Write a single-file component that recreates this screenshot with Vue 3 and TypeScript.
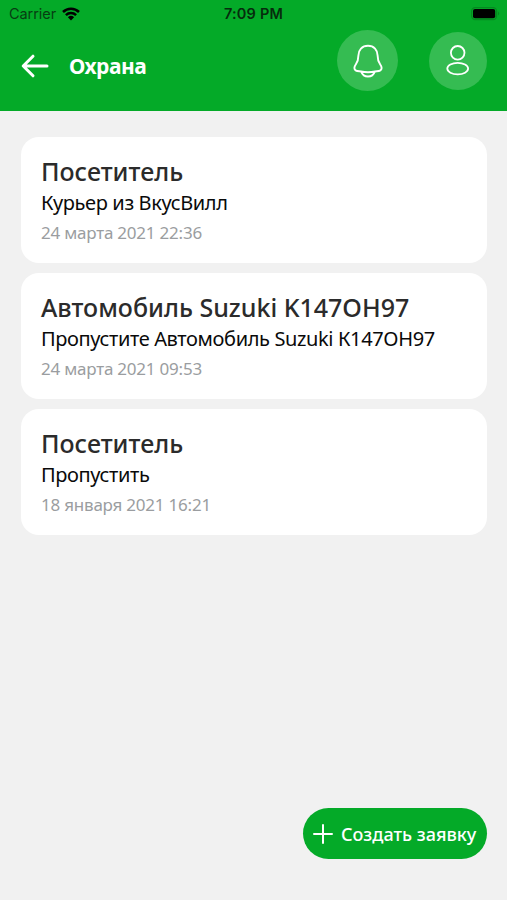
<script setup lang="ts">
interface Request {
  id: number
  title: string
  text: string
  date: string
}

const requests: Request[] = [
  { id: 1, title: 'Посетитель', text: 'Курьер из ВкусВилл', date: '24 марта 2021 22:36' },
  { id: 2, title: 'Автомобиль Suzuki K147OH97', text: 'Пропустите Автомобиль Suzuki К147ОН97', date: '24 марта 2021 09:53' },
  { id: 3, title: 'Посетитель', text: 'Пропустить', date: '18 января 2021 16:21' },
]
</script>

<template>
  <div class="screen">
    <header class="header">
      <div class="status">
        <div class="carrier">
          <span>Carrier</span>
          <svg class="wifi" viewBox="0 0 18 14" width="18" height="14">
            <path d="M1 5a11.400 11.400 0 0 1 16 0M3.900 8.200a7.300 7.300 0 0 1 10.200 0" fill="none" stroke="currentColor" stroke-width="2.500" />
            <path d="M5.900 10.300a4.500 4.500 0 0 1 6.200 0L9 13.400z" fill="currentColor" />
          </svg>
        </div>
        <span class="time">7:09 PM</span>
        <svg class="battery" viewBox="0 0 30 14" width="30" height="14">
          <rect x="0.600" y="0.600" width="25" height="12" rx="3.600" fill="none" stroke="#058a20" stroke-width="1.200" />
          <rect x="2" y="2" width="22.200" height="9.200" rx="2" fill="#000" />
          <path d="M27 4.600q2.400 2 0 4z" fill="#058a20" />
        </svg>
      </div>
      <div class="bar">
        <svg class="back" viewBox="0 0 28 24" width="28" height="24">
          <path d="M12 2.200 2.200 12l9.800 9.800M2.400 12H26" fill="none" stroke="currentColor" stroke-width="3" stroke-linecap="round" stroke-linejoin="round" />
        </svg>
        <h1 class="heading">Охрана</h1>
        <button class="round bell" aria-label="Уведомления">
          <svg viewBox="0 0 32 36" width="32" height="36">
            <path d="M16 2.800C10 2.800 6.400 7 6.400 12.500c0 5-.8 6.300-2.500 8.700C2 23.900 1.700 26.300 4 27.600c1.200.7 3.500.6 5 .9 4.300.9 9.700.9 14 0 1.500-.3 3.800-.2 5-.9 2.300-1.300 2-3.700.1-6.400-1.700-2.400-2.500-3.700-2.500-8.700C25.600 7 22 2.800 16 2.800zM9.200 28.600c2.400 6.600 11.200 6.600 13.600 0" fill="none" stroke="currentColor" stroke-width="1.900" stroke-linejoin="round" />
          </svg>
        </button>
        <button class="round user" aria-label="Профиль">
          <svg viewBox="0 0 24 32" width="24" height="32">
            <circle cx="11.700" cy="7.800" r="6.800" fill="none" stroke="currentColor" stroke-width="1.800" />
            <ellipse cx="11.700" cy="23.600" rx="10.400" ry="5.800" fill="none" stroke="currentColor" stroke-width="1.800" />
          </svg>
        </button>
      </div>
    </header>

    <main class="list">
      <article v-for="item in requests" :key="item.id" class="card">
        <h2 class="title">{{ item.title }}</h2>
        <p class="text">{{ item.text }}</p>
        <time class="date">{{ item.date }}</time>
      </article>
    </main>

    <button class="create">
      <svg viewBox="0 0 20 20" width="20" height="20">
        <path d="M10 1v18M1 10h18" stroke="currentColor" stroke-width="2" stroke-linecap="round" />
      </svg>
      <span>Создать заявку</span>
    </button>
  </div>
</template>

<style>
body { margin: 0; background: #f1f1f1; }
</style>

<style scoped>
.screen { position: relative; display: flex; flex-direction: column; box-sizing: border-box; width: 100%; height: 900px; overflow: hidden; background: #f1f1f1; font-family: "Noto Sans", "Open Sans", sans-serif; }
.header { height: 111px; background: #04aa28; flex: none; }
.status { display: grid; grid-template-columns: 1fr auto 1fr; align-items: center; height: 27px; padding: 0 6px 0 9px; font: 14.5px/27px Inter, sans-serif; color: #073d12; }
.carrier { display: flex; align-items: center; gap: 6px; }
.carrier span { letter-spacing: -0.07px; }
.wifi { color: #000; }
.time { color: #062c0d; font-weight: 600; letter-spacing: 0.2px; margin-left: -3px; }
.battery { justify-self: end; }
.bar { display: flex; align-items: flex-start; height: 84px; padding: 0 20px 0 21px; color: #fff; }
.back { margin-top: 27px; }
.heading { flex: 1; margin: 24px 0 0 20px; font-size: 21px; line-height: 30px; font-weight: 700; letter-spacing: -0.5px; }
.round { display: flex; align-items: center; justify-content: center; padding: 0; border: 0; border-radius: 50%; background: #35bc52; color: #fff; }
.bell { width: 61px; height: 61px; margin: 3px 31px 0 0; }
.user { width: 58px; height: 58px; margin-top: 5px; }
.list { display: flex; flex-direction: column; gap: 10px; padding: 26px 20px 0 21px; }
.card { box-sizing: border-box; height: 126px; padding: 17px 20px; border-radius: 18px; background: #fff; }
.title { margin: 0; font-size: 25px; line-height: 34px; font-weight: 500; color: #2b2b2b; white-space: nowrap; }
.text { margin: 0; font-size: 20px; line-height: 29px; color: #0a0a0a; letter-spacing: -0.37px; white-space: nowrap; }
.date { display: block; margin-top: 3px; font-size: 17px; line-height: 26px; color: #9a9da0; letter-spacing: -0.22px; white-space: nowrap; }
.create { position: absolute; right: 20px; bottom: 41px; display: flex; align-items: center; gap: 8px; width: 184px; height: 51px; padding: 0 10px; border: 0; border-radius: 26px; background: #04aa28; color: #fff; font: 500 18px/26px "Noto Sans", sans-serif; white-space: nowrap; }
</style>
